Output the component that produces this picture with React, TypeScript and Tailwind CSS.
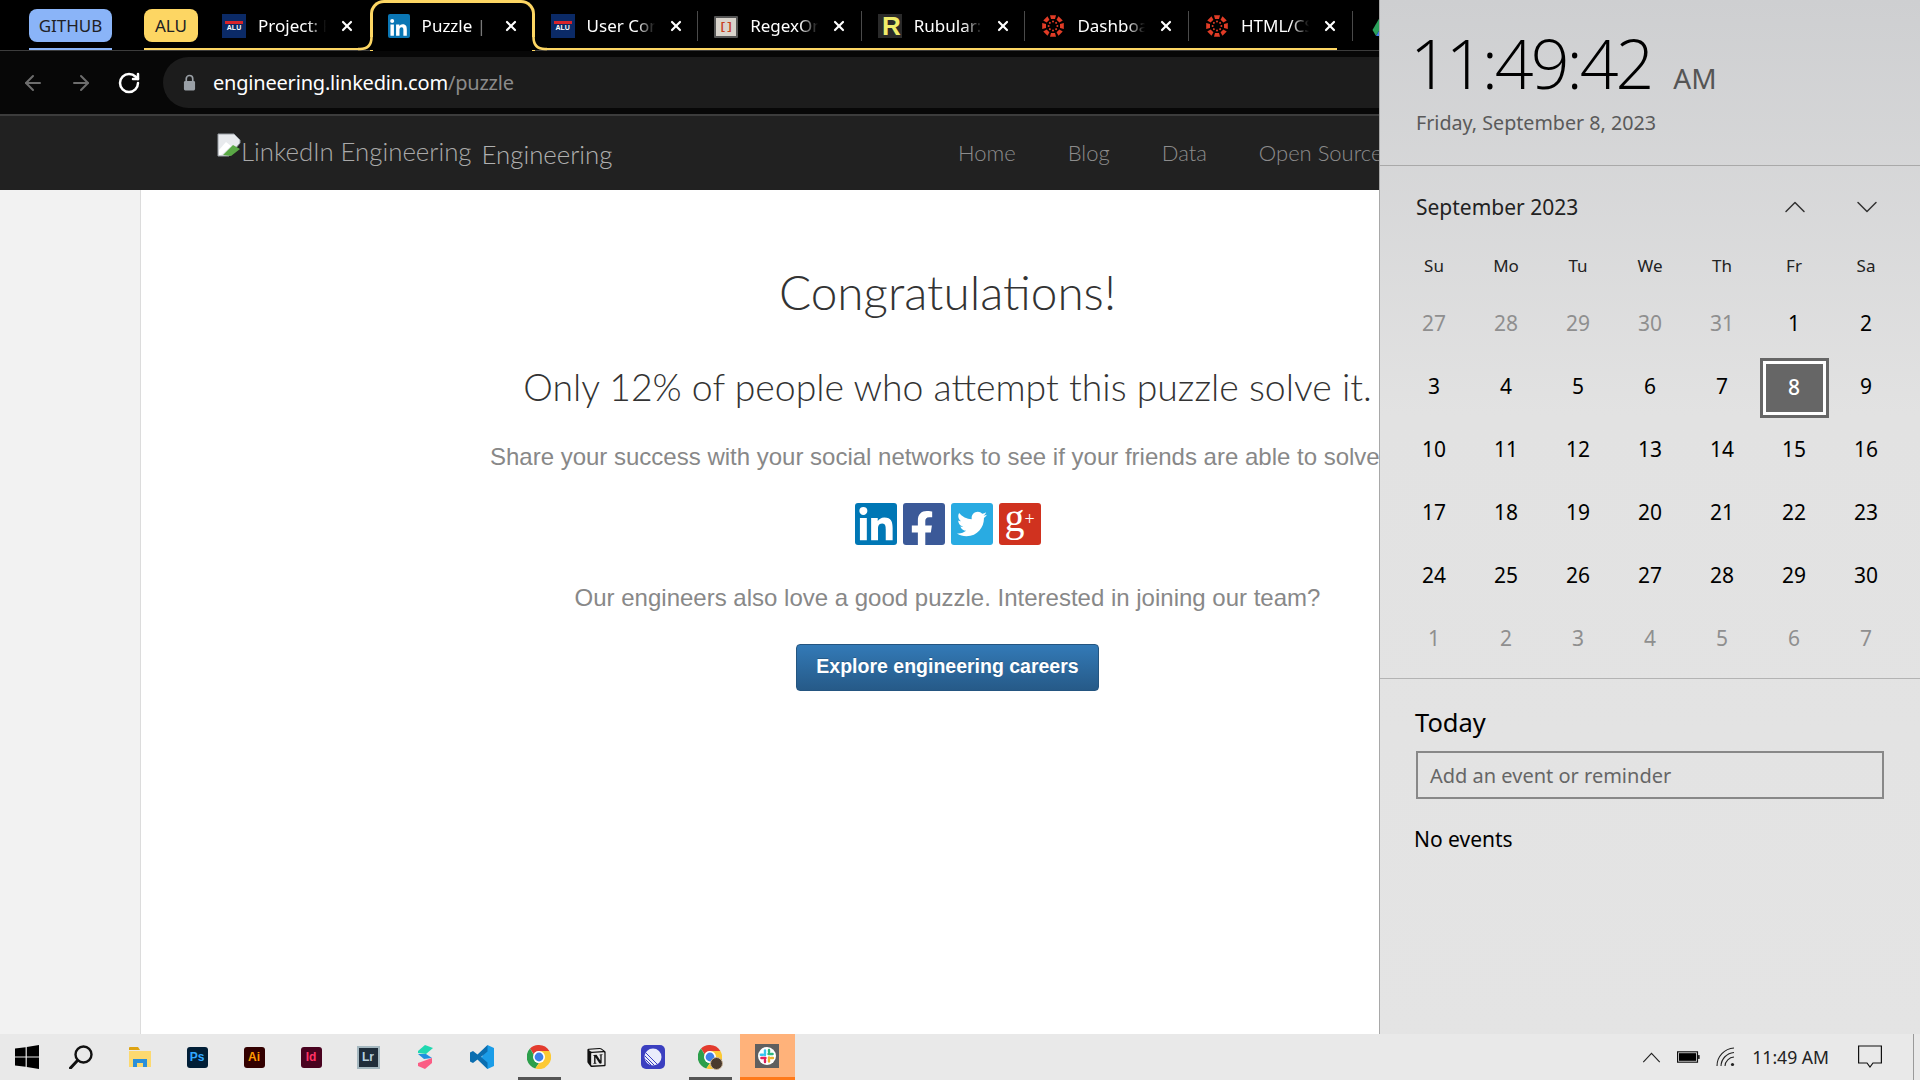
import { ArrowLeft, ArrowRight, RotateCw, X, ChevronUp, ChevronDown } from "lucide-react";
import { FaLinkedinIn, FaFacebookF, FaTwitter } from "react-icons/fa";
import { SiNotion } from "react-icons/si";

// favicons
function AluIcon() {
  return (
    <div className="w-6 h-6 flex-none bg-[#0b2a66] flex flex-col items-center justify-center">
      <div className="w-[18px] h-[3px] bg-[#d8232a]" />
      <span className="text-[7px] leading-[7px] font-bold text-white font-['Liberation_Sans',sans-serif]">ALU</span>
    </div>
  );
}

function LinkedinIcon() {
  return (
    <div className="w-[22px] h-6 flex-none rounded-[2px] bg-[#0a76b4] flex items-end justify-center">
      <FaLinkedinIn className="w-[19px] h-[19px] text-white" />
    </div>
  );
}

function RegexIcon() {
  return (
    <div className="w-6 h-[22px] mt-[2px] flex-none rounded-[1px] bg-[#d9d4cc] border-2 border-[#555] flex items-center justify-center">
      <span className="text-[11px] leading-none font-bold text-[#c8401c] font-['Liberation_Mono',monospace]">[]</span>
    </div>
  );
}

function RubularIcon() {
  return (
    <div className="w-6 h-6 flex-none bg-[#2a2a2a] flex items-end justify-end pr-[1px] overflow-hidden">
      <span className="text-[26px] leading-[24px] font-bold text-[#f0ec6a] font-['Liberation_Sans',sans-serif]">R</span>
    </div>
  );
}

function CanvasIcon() {
  const angles = [0, 45, 90, 135, 180, 225, 270, 315];
  return (
    <svg viewBox="0 0 24 24" className="w-6 h-6 flex-none">
      {angles.map((a) => (
        <g key={a} transform={`rotate(${a} 12 12)`}>
          <path d="M9 1.2 L15 1.2 L14 5 L10 5 Z" fill="#e13c26" />
          <circle cx="12" cy="7.6" r="1" fill="#e13c26" />
        </g>
      ))}
    </svg>
  );
}

function DriveIcon() {
  return (
    <svg viewBox="0 0 24 24" className="w-6 h-6 flex-none">
      <path d="M8.5 2 L15.5 2 L23.5 16 L16.5 16 Z" fill="#f7b928" />
      <path d="M8.5 2 L0.5 16 L4 22 L12 8 Z" fill="#2aa05a" />
      <path d="M4 22 L20 22 L23.5 16 L7.5 16 Z" fill="#3f7fe8" />
    </svg>
  );
}

type TabProps = {
  icon: React.ReactNode;
  title: string;
  underline?: "full" | "short" | "none";
  sep?: boolean;
};

function Tab({ icon, title, underline = "full", sep = true }: TabProps) {
  return (
    <div className="relative flex-none w-[163.6px] h-[50px] flex items-start pl-4 pt-[14px]">
      {icon}
      <span className="ml-3 w-[71px] h-6 overflow-hidden whitespace-nowrap text-[17px] leading-6 text-white [mask-image:linear-gradient(to_right,black_70%,transparent_96%)]">
        {title}
      </span>
      <X className="ml-[10px] mt-1 w-4 h-4 text-white" strokeWidth={3.2} />
      {sep && <div className="absolute right-0 top-[11px] h-[30px] w-px bg-[#4a4a4a]" />}
      {underline === "full" && <div className="absolute bottom-0 inset-x-0 h-[2px] bg-[#fdd663]" />}
      {underline === "short" && <div className="absolute bottom-0 left-0 right-4 h-[2px] bg-[#fdd663]" />}
    </div>
  );
}

function TabFlare({ className }: { className: string }) {
  return (
    <svg viewBox="0 0 15 14" className={`absolute bottom-0 z-10 w-[15px] h-[14px] ${className}`}>
      <rect width="15" height="13" fill="#000" />
      <path d="M0 12 H2 Q13.5 12 13.5 0" fill="none" stroke="#fdd663" strokeWidth="2.6" />
    </svg>
  );
}

function ActiveTab() {
  return (
    <div className="relative flex-none w-[165px] h-[51px] flex items-start pl-[15px] pt-[14px] bg-black border-x-[3px] border-t-[3px] border-[#fdd663] rounded-t-[14px] -mb-px box-border">
      <TabFlare className="-left-[15px]" />
      <TabFlare className="-right-[15px] -scale-x-100" />
      <div className="-mt-[3px] flex items-start">
        <LinkedinIcon />
        <span className="ml-3 w-[71px] h-6 overflow-hidden whitespace-nowrap text-[17px] leading-6 text-white [mask-image:linear-gradient(to_right,black_70%,transparent_96%)]">
          Puzzle | LinkedIn
        </span>
        <X className="ml-[10px] mt-1 w-4 h-4 text-white" strokeWidth={3.2} />
      </div>
    </div>
  );
}

// bits of taskbar
function BarIcon({ children, active }: { children: React.ReactNode; active?: boolean }) {
  return (
    <div className="relative flex-none w-[57px] h-[46px] flex items-center justify-center">
      {children}
      {active && <div className="absolute bottom-0 left-[7px] right-[7px] h-[3px] bg-[#555]" />}
    </div>
  );
}

function AdobeIcon({ label, bg, fg }: { label: string; bg: string; fg: string }) {
  return (
    <div className={`w-[21px] h-[21px] rounded-[3px] flex items-center justify-center ${bg} ${fg}`}>
      <span className="text-[12px] leading-none font-bold font-['Liberation_Sans',sans-serif]">{label}</span>
    </div>
  );
}

function ChromeIcon({ avatar }: { avatar?: boolean }) {
  return (
    <div className="relative w-6 h-6">
      <svg viewBox="0 0 24 24" className="w-6 h-6">
        <path d="M12 0 A12 12 0 0 1 22.4 6 L12 6 A6 6 0 0 0 6.7 9.2 L3 3.6 A12 12 0 0 1 12 0 Z" fill="#e33b2e" />
        <path d="M3 3.6 L8 12 A4 4 0 0 0 12 18 L8.3 23.4 A12 12 0 0 1 3 3.6 Z" fill="#2c9f4b" />
        <path d="M22.4 6 A12 12 0 0 1 8.3 23.4 L13.8 15.6 A4 4 0 0 0 15.5 8.5 L12 6 Z" fill="#fcc934" />
        <circle cx="12" cy="12" r="6" fill="#fff" />
        <circle cx="12" cy="12" r="4.4" fill="#3f7fe8" />
      </svg>
      {avatar && <div className="absolute -right-[1px] -bottom-[1px] w-[13px] h-[13px] rounded-full bg-[#4a3a2e] border border-[#c9b59a]" />}
    </div>
  );
}

function SlackIcon() {
  return (
    <svg viewBox="0 0 16 16" className="w-[16px] h-[16px]">
      <g strokeWidth="2.4" strokeLinecap="round" fill="none">
        <path d="M6 2.5 V7" stroke="#36c5f0" />
        <path d="M1.8 6.8 H4" stroke="#36c5f0" />
        <path d="M13.6 6 H9.5" stroke="#2eb67d" />
        <path d="M10 2 V4" stroke="#2eb67d" />
        <path d="M10 13.5 V9.5" stroke="#ecb22e" />
        <path d="M14 10 H12" stroke="#ecb22e" />
        <path d="M2.4 10 H6.5" stroke="#e01e5a" />
        <path d="M6 14 V12" stroke="#e01e5a" />
      </g>
    </svg>
  );
}

const days: [number, boolean][] = [
  [27, true], [28, true], [29, true], [30, true], [31, true], [1, false], [2, false],
  [3, false], [4, false], [5, false], [6, false], [7, false], [8, false], [9, false],
  [10, false], [11, false], [12, false], [13, false], [14, false], [15, false], [16, false],
  [17, false], [18, false], [19, false], [20, false], [21, false], [22, false], [23, false],
  [24, false], [25, false], [26, false], [27, false], [28, false], [29, false], [30, false],
  [1, true], [2, true], [3, true], [4, true], [5, true], [6, true], [7, true],
];

const weekdays = ["Su", "Mo", "Tu", "We", "Th", "Fr", "Sa"];

export default function App() {
  return (
    <div className="w-[1920px] h-[1080px] flex flex-col overflow-hidden font-['Noto_Sans',sans-serif]">
      <div className="flex-1 flex min-h-0">
        {/* Chrome window, cut off by the calendar flyout */}
        <div className="w-[1379px] flex-none overflow-hidden flex flex-col">
          <div className="h-[51px] flex-none flex pl-[29px] bg-black border-b border-[#3c3c3c]">
            <div className="flex-none w-[83px] h-[50px] border-b-2 border-[#8ab4f8] pt-[9px]">
              <div className="h-[33px] rounded-lg bg-[#8ab4f8] text-[#202124] text-[17px] leading-[33px] text-center">GITHUB</div>
            </div>
            <div className="flex-none w-[32px] h-[50px]" />
            <div className="flex-none w-[62px] h-[50px] border-b-2 border-[#fdd663] pt-[9px] pr-2">
              <div className="h-[33px] rounded-lg bg-[#fdd663] text-[#202124] text-[17px] leading-[33px] text-center">ALU</div>
            </div>
            <Tab icon={<AluIcon />} title="Project: Regex" sep={false} />
            <ActiveTab />
            <Tab icon={<AluIcon />} title="User Context" />
            <Tab icon={<RegexIcon />} title="RegexOne" />
            <Tab icon={<RubularIcon />} title="Rubular: a Ruby" />
            <Tab icon={<CanvasIcon />} title="Dashboard" />
            <Tab icon={<CanvasIcon />} title="HTML/CSS" underline="short" />
            <div className="flex-none pl-[19px] pt-[14px]">
              <DriveIcon />
            </div>
          </div>

          <div className="h-[63px] flex-none bg-[#070707] flex items-center border-b-0">
            <ArrowLeft className="ml-[21px] w-6 h-6 text-[#6d6d6d]" strokeWidth={2} />
            <ArrowRight className="ml-6 w-6 h-6 text-[#6d6d6d]" strokeWidth={2} />
            <RotateCw className="ml-6 w-6 h-6 text-white" strokeWidth={2.5} />
            <div className="ml-[22px] flex-1 h-[51px] -mr-10 rounded-full bg-[#1c1c1c] flex items-center pl-[20px]">
              <svg viewBox="0 0 14 18" className="w-[13px] h-[17px]">
                <path d="M3.5 8 V5 A3.5 3.5 0 0 1 10.5 5 V8" fill="none" stroke="#9aa0a6" strokeWidth="1.8" />
                <rect x="1" y="7.5" width="12" height="10" rx="1.5" fill="#9aa0a6" />
              </svg>
              <span className="ml-[17px] text-[20px] text-white tracking-[-0.2px]">
                engineering.linkedin.com<span className="text-[#8b8b8b]">/puzzle</span>
              </span>
            </div>
          </div>

          <div className="h-[76px] flex-none bg-[#212121] border-t-2 border-[#3c3c3c] flex items-start font-['Lato',sans-serif] font-light whitespace-nowrap">
            <div className="ml-[217px] mt-[17px] flex items-start">
              <svg viewBox="0 0 24 24" className="w-6 h-6 flex-none">
                <path d="M1 1 H17 L23 7 V10 L12 23 H1 Z" fill="#e8eaed" stroke="#9aa0a6" strokeWidth="1" />
                <path d="M2 17 L9 9 L14 13 L4 22 H2 Z" fill="#ffffff" />
                <path d="M6 22 L16 12 L23 16 L14 23 Z" fill="#5aa845" />
              </svg>
              <span className="text-[25.8px] leading-[36px] text-[#a9a9a9]">LinkedIn Engineering</span>
              <span className="ml-[10px] mt-[3px] text-[25.8px] leading-[36px] text-[#b0b0b0]">Engineering</span>
            </div>
            <div className="ml-auto mt-[19px] flex gap-[52px] text-[22px] leading-[36px] text-[#8c8c8c] w-[421px] flex-none">
              <span>Home</span>
              <span>Blog</span>
              <span>Data</span>
              <span>Open Source</span>
            </div>
          </div>

          <div className="flex-1 flex bg-white min-h-0">
            <div className="flex-none w-[141px] bg-[#f2f2f2] border-r border-[#dcdcdc]" />
            <main className="flex-none w-[1613px] flex flex-col items-center text-center whitespace-nowrap">
              <h1 className="mt-[72px] text-[47.7px] leading-[60px] font-light text-[#333] font-['Lato',sans-serif]">Congratulations!</h1>
              <h2 className="mt-[40px] text-[37.4px] leading-[50px] font-light text-[#333] font-['Lato',sans-serif]">
                Only 12% of people who attempt this puzzle solve it.
              </h2>
              <p className="mt-[28px] text-[24px] leading-[34px] text-[#888] font-['Liberation_Sans',sans-serif]">
                Share your success with your social networks to see if your friends are able to solve it.
              </p>
              <div className="mt-[29px] flex gap-[6px]">
                <div className="w-[42px] h-[42px] rounded-[3px] bg-[#0077b5] flex items-end justify-center text-white">
                  <FaLinkedinIn className="w-[38px] h-[38px]" />
                </div>
                <div className="w-[42px] h-[42px] rounded-[3px] bg-[#3b5998] flex items-end justify-end pr-[4px] overflow-hidden text-white">
                  <FaFacebookF className="w-[38px] h-[38px] -mb-[4px]" />
                </div>
                <div className="w-[42px] h-[42px] rounded-[3px] bg-[#29abe2] flex items-center justify-center text-white">
                  <FaTwitter className="w-[30px] h-[30px]" />
                </div>
                <div className="w-[42px] h-[42px] rounded-[3px] bg-[#d0321f] flex items-start justify-center text-white font-['Liberation_Serif',serif]">
                  <span className="text-[40px] leading-[30px]">g</span>
                  <span className="text-[18px] leading-[32px]">+</span>
                </div>
              </div>
              <p className="mt-[36px] text-[24px] leading-[34px] text-[#888] font-['Liberation_Sans',sans-serif]">
                Our engineers also love a good puzzle. Interested in joining our team?
              </p>
              <button className="mt-[29px] w-[303px] h-[47px] pb-[2px] rounded-[4px] border border-[#245580] bg-linear-to-b from-[#337ab7] to-[#265a88] text-white text-[19.5px] font-bold font-['Liberation_Sans',sans-serif] [text-shadow:0_-1px_0_rgba(0,0,0,0.2)]">
                Explore engineering careers
              </button>
            </main>
          </div>
        </div>

        {/* Calendar flyout */}
        <aside className="w-[541px] flex-none flex flex-col border-l border-[#a8a8a8] bg-linear-to-b from-[#cecfd1] via-[#e2e2e2] via-40% to-[#e4e4e4] text-black">
          <div className="h-[166px] flex-none border-b border-[#a9a9a9] pl-[36px]">
            <div className="flex items-end h-[103px]">
              <span className="-ml-[6px] text-[68px] leading-[80px] font-light font-['Open_Sans',sans-serif] tracking-[-3px]">11:49:42</span>
              <span className="ml-[22px] mb-[7px] text-[28px] leading-[36px] text-[#555]">AM</span>
            </div>
            <div className="mt-[6px] text-[19.7px] leading-[28px] text-[#5a5a5a]">Friday, September 8, 2023</div>
          </div>

          <div className="h-[513px] flex-none border-b border-[#b3b3b3]">
            <div className="mt-[25px] h-[32px] flex items-center pl-[36px] pr-[35px]">
              <span className="text-[21px] leading-[32px] text-[#222]">September 2023</span>
              <ChevronUp className="ml-auto w-9 h-9 text-[#333]" strokeWidth={1} />
              <ChevronDown className="ml-9 w-9 h-9 text-[#333]" strokeWidth={1} />
            </div>
            <div className="mt-[27px] ml-[18px] w-[504px] grid grid-cols-7 h-[32px] text-[17px] leading-[32px] text-center text-[#222]">
              {weekdays.map((d) => (
                <div key={d}>{d}</div>
              ))}
            </div>
            <div className="mt-[10px] ml-[18px] w-[504px] grid grid-cols-7 auto-rows-[63px]">
              {days.map(([d, muted], i) =>
                i === 12 ? (
                  <div key={i} className="flex items-center justify-center">
                    <div className="w-[69px] h-[60px] mt-[2px] border-[3px] border-[#666] bg-[#666] outline-[3px] -outline-offset-[6px] outline-white flex items-center justify-center text-white text-[21px] font-medium">
                      {d}
                    </div>
                  </div>
                ) : (
                  <div key={i} className={`flex items-center justify-center text-[21px] ${muted ? "text-[#8f8f8f]" : "text-black"}`}>
                    {d}
                  </div>
                )
              )}
            </div>
          </div>

          <div className="pl-[36px]">
            <div className="mt-[25px] -ml-[1px] text-[25.5px] leading-[36px]">Today</div>
            <div className="mt-[11px] w-[468px] h-[48px] border-2 border-[#888] flex items-center pl-[12px] pt-[2px] text-[20px] text-[#666]">
              Add an event or reminder
            </div>
            <div className="mt-[24px] -ml-[2px] text-[21px] leading-[32px]">No events</div>
          </div>
        </aside>
      </div>

      {/* Windows taskbar */}
      <div className="h-[46px] flex-none bg-[#e9e9e9] flex items-stretch">
        <div className="flex-none w-[54px] h-[46px] flex items-center justify-center">
          <svg viewBox="0 0 24 24" className="w-6 h-6">
            <path d="M0 3.6 L10.6 2.2 V11.4 H0 Z M11.8 2 L24 0 V11.4 H11.8 Z M0 12.6 H10.6 V21.8 L0 20.4 Z M11.8 12.6 H24 V24 L11.8 22 Z" fill="#000" />
          </svg>
        </div>
        <div className="flex-none w-[54px] h-[46px] flex items-center justify-center">
          <svg viewBox="0 0 24 24" className="w-6 h-6" fill="none" stroke="#111" strokeWidth="2.4">
            <circle cx="14.5" cy="9.5" r="8" />
            <path d="M8.5 15.5 L1.5 23" strokeLinecap="round" strokeWidth="3" />
          </svg>
        </div>
        <div className="flex-none w-[3.5px]" />
        <BarIcon>
          <svg viewBox="0 0 22 22" className="w-[22px] h-[22px]">
            <path d="M0 2 A1 1 0 0 1 1 1 H9 L11 4 H0 Z" fill="#dea312" />
            <path d="M0 5 H22 V21 H0 Z" fill="#fcd970" />
            <path d="M4 21 V13 H18 V21 H14 V17 H8 V21 Z" fill="#2b8fd9" />
          </svg>
        </BarIcon>
        <BarIcon><AdobeIcon label="Ps" bg="bg-[#001e36]" fg="text-[#31a8ff]" /></BarIcon>
        <BarIcon><AdobeIcon label="Ai" bg="bg-[#330000]" fg="text-[#ff9a00]" /></BarIcon>
        <BarIcon><AdobeIcon label="Id" bg="bg-[#49021f]" fg="text-[#ff3366]" /></BarIcon>
        <BarIcon>
          <div className="w-[23px] h-[23px] bg-[#1f2d3a] border-2 border-[#a5b8c0] flex items-center justify-center text-[#b8d0de] text-[12px] font-bold font-['Liberation_Sans',sans-serif]">Lr</div>
        </BarIcon>
        <BarIcon>
          <svg viewBox="0 0 16 24" className="w-4 h-6">
            <path d="M1 6 L8 0 L16 3 L9 9 L1 8 Z" fill="#1fd8b0" />
            <path d="M1 9 L9 9 L15 13 L7 14 Z" fill="#1f8fe0" />
            <path d="M1 18 L15 13 L15 18 L8 24 L1 21 Z" fill="#fb5c84" />
          </svg>
        </BarIcon>
        <BarIcon>
          <svg viewBox="0 0 24 24" className="w-6 h-6">
            <path d="M17.5 0 L24 3 V21 L17.5 24 L7 13.5 L12 12 Z" fill="#1b9de8" />
            <path d="M17.5 0 L7.5 9.5 L3 6 L0 7.5 V16.5 L3 18 L7.5 14.5 L17.5 24 V17.5 L11 12 L17.5 6.5 Z" fill="#0b6eb0" />
          </svg>
        </BarIcon>
        <BarIcon active><ChromeIcon /></BarIcon>
        <BarIcon>
          <SiNotion className="w-[19px] h-[19px] text-[#111]" />
        </BarIcon>
        <BarIcon>
          <svg viewBox="0 0 24 24" className="w-6 h-6">
            <rect width="24" height="24" rx="5" fill="#3b3fc0" />
            <circle cx="12" cy="12" r="8.5" fill="#e9ecfb" />
            <path d="M4 11 L13 20 M4.5 14.5 L10 20 M5 8 L16 19" stroke="#3b3fc0" strokeWidth="1" />
          </svg>
        </BarIcon>
        <BarIcon active><ChromeIcon avatar /></BarIcon>
        <div className="flex-none ml-px w-[55px] h-[46px] bg-[#ffb27a] border-b-[3px] border-[#ff7a1a] flex items-center justify-center">
          <div className="w-6 h-6 bg-[#5f5f5f] flex items-center justify-center">
            <div className="w-[18px] h-[18px] rounded-full bg-white flex items-center justify-center">
              <SlackIcon />
            </div>
          </div>
        </div>

        {/* system tray */}
        <div className="ml-auto flex items-center text-[#111]">
          <svg viewBox="0 0 20 12" className="w-[19px] h-[11px]">
            <path d="M1 11 L10 1.5 L19 11" fill="none" stroke="#222" strokeWidth="1.2" />
          </svg>
          <svg viewBox="0 0 24 12" className="ml-[16px] w-[23px] h-[12px]">
            <rect x="0.6" y="0.6" width="20.8" height="10.8" fill="none" stroke="#111" strokeWidth="1.2" />
            <rect x="2" y="2" width="18" height="8" fill="#000" />
            <rect x="22" y="4" width="1.6" height="4" fill="#111" />
          </svg>
          <svg viewBox="0 0 20 20" className="ml-[16px] w-[20px] h-[20px]" fill="none" stroke="#222" strokeWidth="1.1">
            <path d="M1 19 A18 18 0 0 1 18 1" />
            <path d="M5 19 A14 14 0 0 1 18 5.5" />
            <path d="M9 19 A9.5 9.5 0 0 1 18 10" />
            <circle cx="16.5" cy="17.5" r="1.6" fill="#222" stroke="none" />
          </svg>
          <span className="ml-[16px] text-[17.6px] text-[#222]">11:49 AM</span>
          <svg viewBox="0 0 24 24" className="ml-[29px] w-6 h-6" fill="none" stroke="#111" strokeWidth="1.2">
            <path d="M0.6 1 H23.4 V18 H15 L12 22 L9 18 H0.6 Z" />
          </svg>
          <div className="ml-[31px] mr-[6px] w-px h-[46px] bg-[#9a9a9a]" />
        </div>
      </div>
    </div>
  );
}
